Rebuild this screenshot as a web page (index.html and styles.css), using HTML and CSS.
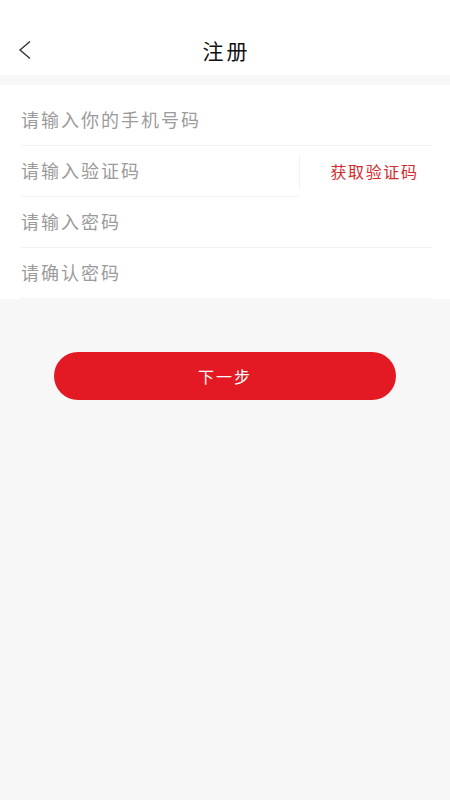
FILE: index.html
```html
<!DOCTYPE html>
<html lang="zh-CN">
<head>
    <meta charset="UTF-8">
    <meta name="viewport" content="width=device-width, initial-scale=1.0">
    <title>注册</title>
    <link rel="stylesheet" href="styles.css">
</head>
<body>
    <header class="topbar">
        <button class="back-btn" aria-label="返回">
            <svg width="16" height="20" viewBox="0 0 16 20">
                <path d="M13 1.5 L3 10 L13 18.5" fill="none" stroke="#333" stroke-width="1.4" />
            </svg>
        </button>
        <h1 class="title">注册</h1>
        <span></span>
    </header>

    <form class="form">
        <div class="row">
            <input class="field" type="tel" placeholder="请输入你的手机号码">
        </div>
        <div class="row row-code">
            <input class="field" type="text" placeholder="请输入验证码">
            <button type="button" class="code-btn"><span>获取验证码</span></button>
        </div>
        <div class="row">
            <input class="field" type="password" placeholder="请输入密码">
        </div>
        <div class="row">
            <input class="field" type="password" placeholder="请确认密码">
        </div>
    </form>

    <div class="actions">
        <button class="next-btn">下一步</button>
    </div>
</body>
</html>
```

FILE: styles.css
```css
* {
    margin: 0;
    padding: 0;
    box-sizing: border-box;
}

body {
    font-family: "Noto Sans CJK SC", "Noto Sans", sans-serif;
    background: #f7f7f7;
    min-height: 100vh;
    color: #222;
}

button,
input {
    font-family: inherit;
    border: none;
    background: none;
    outline: none;
}

/* top bar */
.topbar {
    background: #fff;
    padding-top: 25px;
    height: 75px;
    display: grid;
    grid-template-columns: 50px 1fr 50px;
    align-items: center;
}

.back-btn {
    height: 50px;
    display: flex;
    align-items: center;
    padding-left: 17px;
}

.back-btn svg {
    display: block;
}

.title {
    text-align: center;
    font-size: 21px;
    font-weight: 400;
    letter-spacing: 3px;
    padding-left: 3px;
    color: #111;
}

/* form */
.form {
    margin-top: 10px;
    background: #fff;
    padding: 10px 18px 0 21px;
}

.row {
    height: 51px;
    display: flex;
    align-items: center;
    border-bottom: 1px solid #f1f1f1;
}

.row:last-child {
    border-bottom-color: #f6f6f6;
}

.field {
    flex: 1;
    min-width: 0;
    height: 100%;
    padding-bottom: 2px;
    font-size: 18px;
    letter-spacing: 2px;
    color: #333;
}

.field::placeholder {
    color: #9b9b9b;
}

.row-code {
    border-bottom: none;
}

.row-code .field {
    border-bottom: 1px solid #f1f1f1;
}

.code-btn {
    width: 151px;
    height: 100%;
    margin-right: -18px;
    padding-bottom: 2px;
    display: flex;
    align-items: center;
    justify-content: center;
    position: relative;
    font-size: 16px;
    letter-spacing: 1.6px;
    color: #d42a2e;
    cursor: pointer;
}

.code-btn::before {
    content: "";
    position: absolute;
    left: 0;
    top: 10px;
    bottom: 9px;
    border-left: 1px solid #f0f0f0;
}

/* next */
.actions {
    padding: 53px 54px 0;
}

.next-btn {
    width: 100%;
    height: 48px;
    border-radius: 24px;
    background: #e31a24;
    color: #fff;
    font-size: 16px;
    letter-spacing: 2px;
    cursor: pointer;
}
```
